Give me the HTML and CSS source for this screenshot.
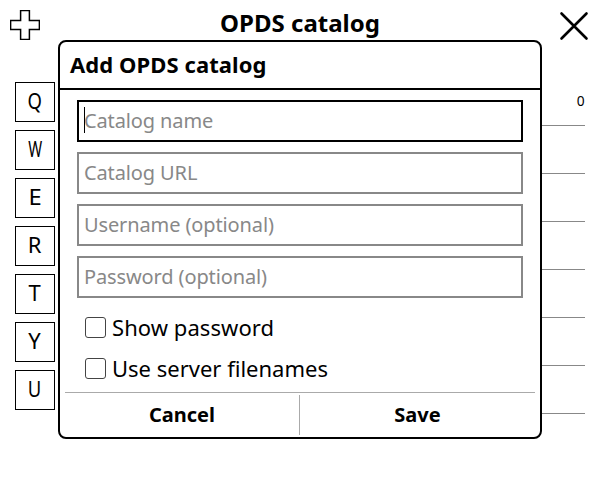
FILE: index.html
```html
<!DOCTYPE html>
<html lang="en">
<head>
<meta charset="utf-8">
<title>OPDS catalog</title>
<link rel="stylesheet" href="styles.css">
</head>
<body>
<div class="screen">
  <header class="titlebar">
    <svg class="plus" viewBox="0 0 30 30"><path d="M10.6.6h8.8v10h10v8.8h-10v10h-8.8v-10H.6v-8.8h10z"/></svg>
    <h1>OPDS catalog</h1>
    <svg class="close" viewBox="0 0 30 30"><path d="M2.5 2.5l25 25M27.5 2.5l-25 25"/></svg>
  </header>
  <main class="list">
    <div class="row"><span class="key"><span class="glyph q">Q</span></span><span class="line"><span class="count">0</span></span></div>
    <div class="row"><span class="key"><span class="glyph w">W</span></span><span class="line"></span></div>
    <div class="row"><span class="key"><span class="glyph e">E</span></span><span class="line"></span></div>
    <div class="row"><span class="key"><span class="glyph r">R</span></span><span class="line"></span></div>
    <div class="row"><span class="key"><span class="glyph t">T</span></span><span class="line"></span></div>
    <div class="row"><span class="key"><span class="glyph y">Y</span></span><span class="line"></span></div>
    <div class="row"><span class="key"><span class="glyph u">U</span></span><span class="line"></span></div>
  </main>
  <section class="dialog">
    <h2>Add OPDS catalog</h2>
    <div class="fields">
      <div class="field active"><span class="caret"></span><input type="text" placeholder="Catalog name"></div>
      <div class="field"><input type="text" placeholder="Catalog URL"></div>
      <div class="field"><input type="text" placeholder="Username (optional)"></div>
      <div class="field"><input type="text" placeholder="Password (optional)"></div>
    </div>
    <div class="checks">
      <label class="check show"><span class="box"></span>Show password</label>
      <label class="check"><span class="box"></span>Use server filenames</label>
    </div>
    <footer class="actions">
      <button>Cancel</button>
      <span class="divider"></span>
      <button>Save</button>
    </footer>
  </section>
</div>
</body>
</html>
```
FILE: styles.css
```css
* { box-sizing: border-box; }
body { margin: 0; background: #fff; color: #000; font-family: "Noto Sans", sans-serif; }
.screen { position: relative; width: 598px; height: 477px; overflow: hidden; }
.titlebar { display: flex; align-items: flex-start; justify-content: space-between; height: 78px; padding: 10px 9px 0 10px; }
.titlebar h1 { margin: -4px 0 0 1px; font-size: 24px; line-height: 34px; font-weight: 700; }
.plus, .close { width: 30px; height: 30px; fill: none; stroke: #000; }
.plus { stroke-width: 1.5; }
.close { margin-top: 1px; stroke-width: 2.6; stroke-linecap: round; }
.list { padding: 0 13px 0 15px; }
.row { display: flex; height: 48px; gap: 10px; }
.key { display: flex; align-items: center; justify-content: center; width: 40px; height: 40px; margin-top: 4px; padding-bottom: 4px; border: 1px solid #000; font-size: 22px; line-height: 34px; }
.glyph { display: block; }
.q { transform: scaleX(.84); }
.w { transform: scaleX(.68); }
.e { transform: scaleX(1.08); }
.r, .t, .y { transform: translateX(-.5px); }
.u { transform: translateX(-.5px) scaleX(.84); }
.line { flex: 1; border-bottom: 1px solid #888; font-size: 15px; line-height: 44px; text-align: right; }
.count { display: inline-block; transform: scaleX(.92); transform-origin: right; }
.dialog { position: absolute; left: 58px; top: 40px; width: 484px; height: 399px; border: 2px solid #000; border-radius: 8px; background: #fff; }
.dialog h2 { margin: 0; height: 48px; padding-left: 10px; border-bottom: 2px solid #000; font-size: 22px; line-height: 44px; font-weight: 700; letter-spacing: .08px; }
.fields { display: flex; flex-direction: column; gap: 10px; padding: 10px 17px 0; }
.field { position: relative; height: 42px; border: 2px solid #888; }
.active { border-color: #000; }
.field input { display: block; width: 100%; height: 38px; padding: 0 5px 2px; border: 0; outline: 0; background: transparent; font: 20px "Noto Sans", sans-serif; letter-spacing: -.12px; }
.field input::placeholder { color: #888; opacity: 1; }
.caret { position: absolute; left: 5px; top: 5px; width: 1px; height: 26px; background: #000; }
.checks { padding: 9px 25px 0; }
.check { display: flex; align-items: center; gap: 7px; height: 41px; font-size: 22px; line-height: 41px; }
.show { letter-spacing: .06px; }
.box { width: 21px; height: 21px; margin-right: -1px; border: 1px solid #444; border-radius: 3px; }
.actions { display: flex; align-items: center; height: 44px; margin: 3px 5px 0; padding-top: 1px; border-top: 1px solid #aaa; }
.actions button { flex: 1; padding: 0; border: 0; background: none; color: #000; font: 700 20px/40px "Noto Sans", sans-serif; }
.actions button:first-child { flex: 0 0 234px; }
.divider { width: 1px; height: 40px; background: #aaa; }
```
